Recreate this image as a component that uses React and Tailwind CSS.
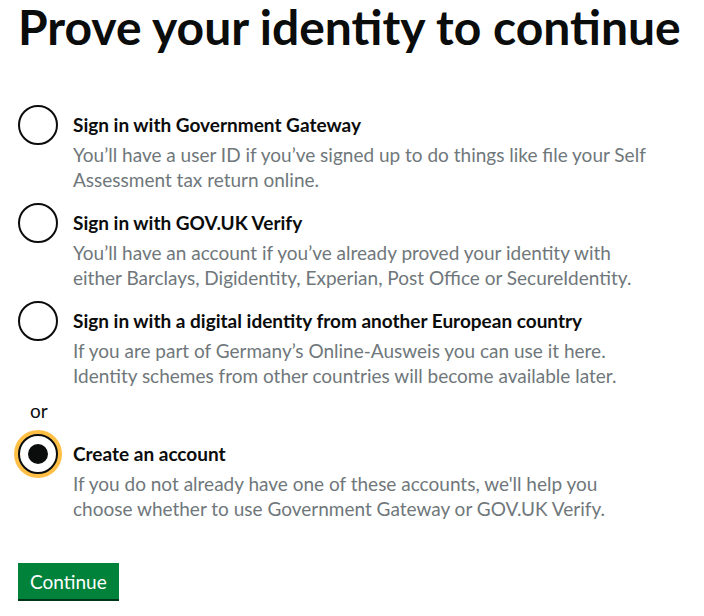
import { useState } from "react";

const options = [
  {
    id: "gateway",
    label: "Sign in with Government Gateway",
    hint: ["You’ll have a user ID if you’ve signed up to do things like file your Self", "Assessment tax return online."],
  },
  {
    id: "verify",
    label: "Sign in with GOV.UK Verify",
    hint: ["You’ll have an account if you’ve already proved your identity with", "either Barclays, Digidentity, Experian, Post Office or SecureIdentity."],
  },
  {
    id: "eidas",
    label: "Sign in with a digital identity from another European country",
    hint: ["If you are part of Germany’s Online-Ausweis you can use it here.", "Identity schemes from other countries will become available later."],
  },
];

const createOption = {
  id: "create",
  label: "Create an account",
  hint: ["If you do not already have one of these accounts, we'll help you", "choose whether to use Government Gateway or GOV.UK Verify."],
};

function Radio({ option, checked, onSelect }) {
  return (
    <label className="flex cursor-pointer" onClick={() => onSelect(option.id)}>
      <span className="relative w-10 h-10 shrink-0">
        {checked && (
          <span className="absolute -inset-1 rounded-full bg-[#ffbf47]"></span>
        )}
        <span className="absolute inset-0 rounded-full border-2 border-[#0b0c0c] bg-white flex items-center justify-center">
          {checked && <span className="w-5 h-5 rounded-full bg-[#0b0c0c]"></span>}
        </span>
      </span>
      <span className="pl-[15px] pt-[7px]">
        <span className="block text-[19px] leading-[25px] font-bold text-[#0b0c0c]">{option.label}</span>
        <span className="block text-[19px] leading-[25px] text-[#6f777b] mt-[5px]">
          {option.hint[0]}
          <br />
          {option.hint[1]}
        </span>
      </span>
    </label>
  );
}

export default function App() {
  const [selected, setSelected] = useState("create");

  return (
    <div className="bg-white min-h-screen px-[18px] pt-[2px] text-[#0b0c0c]" style={{ fontFamily: "Lato, 'Noto Sans', sans-serif" }}>
      <h1 className="text-[48px] leading-[50px] font-bold">Prove your identity to continue</h1>

      <div className="mt-[53px] flex flex-col gap-[11px]">
        {options.map((o) => (
          <Radio key={o.id} option={o} checked={selected === o.id} onSelect={setSelected} />
        ))}
      </div>

      <p className="text-[19px] leading-[25px] pl-3 mt-[10px]">or</p>

      <div className="mt-[11px]">
        <Radio option={createOption} checked={selected === "create"} onSelect={setSelected} />
      </div>

      <button className="mt-[42px] bg-[#00823b] text-white text-[19px] leading-[25px] px-3 pt-[6px] pb-[5px] shadow-[0_2px_0_#003618]">
        Continue
      </button>
    </div>
  );
}
